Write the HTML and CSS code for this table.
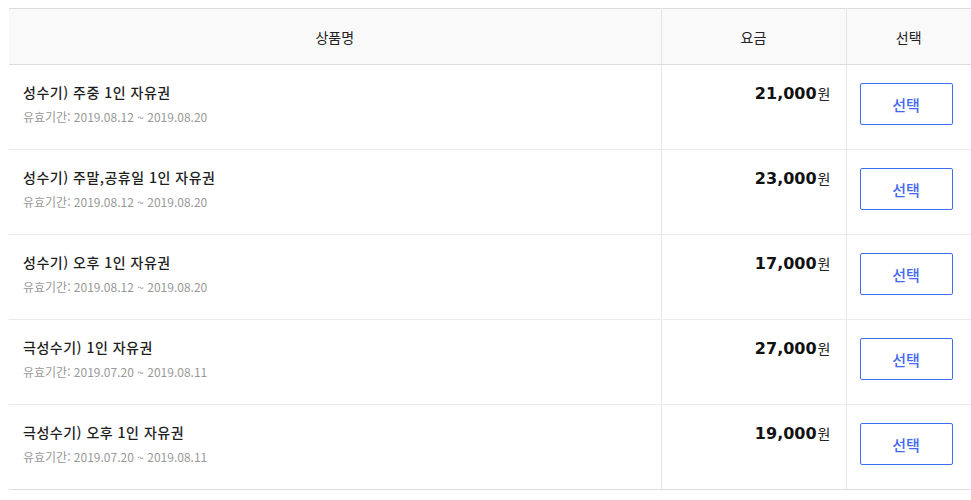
FILE: index.html
```html
<!DOCTYPE html>
<html lang="ko">
<head>
<meta charset="utf-8">
<link rel="stylesheet" href="styles.css">
</head>
<body>
<table class="product-table">
  <colgroup>
    <col class="col-name">
    <col class="col-price">
    <col class="col-select">
  </colgroup>
  <thead>
    <tr>
      <th>상품명</th>
      <th class="bl">요금</th>
      <th class="bl">선택</th>
    </tr>
  </thead>
  <tbody>
    <tr>
      <td class="name"><div class="title">성수기) 주중 1인 자유권</div><div class="period">유효기간: 2019.08.12 ~ 2019.08.20</div></td>
      <td class="price bl"><span class="num">21,000</span><span class="won">원</span></td>
      <td class="select bl"><button class="btn">선택</button></td>
    </tr>
    <tr>
      <td class="name"><div class="title">성수기) 주말,공휴일 1인 자유권</div><div class="period">유효기간: 2019.08.12 ~ 2019.08.20</div></td>
      <td class="price bl"><span class="num">23,000</span><span class="won">원</span></td>
      <td class="select bl"><button class="btn">선택</button></td>
    </tr>
    <tr>
      <td class="name"><div class="title">성수기) 오후 1인 자유권</div><div class="period">유효기간: 2019.08.12 ~ 2019.08.20</div></td>
      <td class="price bl"><span class="num">17,000</span><span class="won">원</span></td>
      <td class="select bl"><button class="btn">선택</button></td>
    </tr>
    <tr>
      <td class="name"><div class="title">극성수기) 1인 자유권</div><div class="period">유효기간: 2019.07.20 ~ 2019.08.11</div></td>
      <td class="price bl"><span class="num">27,000</span><span class="won">원</span></td>
      <td class="select bl"><button class="btn">선택</button></td>
    </tr>
    <tr>
      <td class="name"><div class="title">극성수기) 오후 1인 자유권</div><div class="period">유효기간: 2019.07.20 ~ 2019.08.11</div></td>
      <td class="price bl"><span class="num">19,000</span><span class="won">원</span></td>
      <td class="select bl"><button class="btn">선택</button></td>
    </tr>
  </tbody>
</table>
</body>
</html>
```

FILE: styles.css
```css
html, body {
  background: #fff;
}
body {
  margin: 8px 0 0 9px;
  font-family: "Noto Sans CJK KR", "Noto Sans", sans-serif;
  color: #222;
}
.product-table {
  width: 962px;
  border-collapse: collapse;
  table-layout: fixed;
  border-top: 1px solid #dcdcdc;
  border-bottom: 1px solid #dcdcdc;
}
.col-name { width: 652px; }
.col-price { width: 185px; }
.col-select { width: 125px; }

.product-table th {
  height: 55px;
  padding: 0;
  background: #f9f9f9;
  font-weight: normal;
  font-size: 14px;
  color: #222;
  text-align: center;
  vertical-align: middle;
  border-bottom: 1px solid #dcdcdc;
}
.product-table th.bl,
.product-table td.bl {
  border-left: 1px solid #e6e6e6;
}
.product-table td {
  box-sizing: border-box;
  height: 85px;
  vertical-align: top;
  border-bottom: 1px solid #ebebeb;
}
.product-table tbody tr:last-child td {
  border-bottom: 1px solid #dcdcdc;
}
.product-table td.name {
  padding: 17px 0 0 14px;
}
.title {
  font-size: 14px;
  line-height: 20px;
  color: #1e1e1e;
  font-weight: 500;
  letter-spacing: 0.5px;
}
.period {
  margin-top: 6px;
  font-size: 12px;
  line-height: 18px;
  color: #999;
}
.product-table td.price {
  text-align: right;
  padding: 16px 15px 0 0;
  line-height: 22px;
}
.num {
  font-family: "DejaVu Sans", sans-serif;
  font-weight: bold;
  font-size: 16px;
  color: #111;
}
.won {
  font-size: 14px;
  color: #222;
  margin-left: 1px;
}
.product-table td.select {
  padding: 18px 0 0 13px;
}
.btn {
  display: block;
  width: 93px;
  height: 42px;
  padding: 0;
  background: #fff;
  border: 1px solid #3d6ff2;
  border-radius: 2px;
  color: #4668f0;
  font-family: "Noto Sans CJK KR", sans-serif;
  font-size: 15px;
  font-weight: 500;
  cursor: pointer;
}
```
